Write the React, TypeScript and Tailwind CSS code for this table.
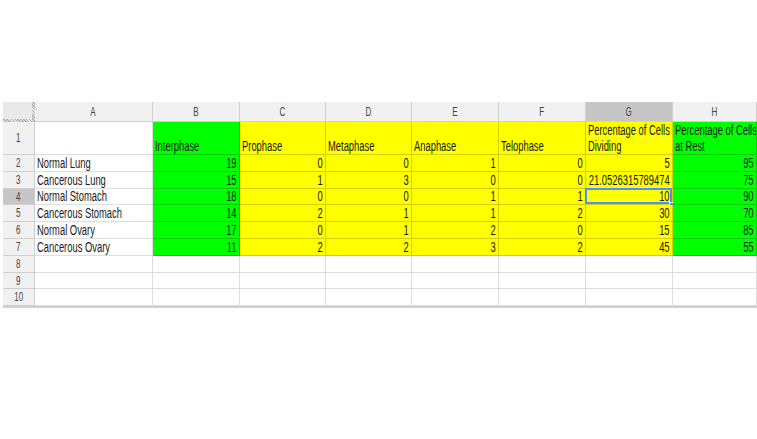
import React from 'react';

type Fill = 'white' | 'green' | 'yellow';

const COLS = ['A', 'B', 'C', 'D', 'E', 'F', 'G', 'H'];

// background + gridline colour for each fill
const fillClass: Record<Fill, string> = {
  white: 'bg-white border-[#dedede]',
  green: 'bg-[#00ff00] border-[#00cf00]',
  yellow: 'bg-[#ffff00] border-[#d2d200]',
};

const rowFills: Fill[] = ['white', 'green', 'yellow', 'yellow', 'yellow', 'yellow', 'yellow', 'green'];

const data: (string | number)[][] = [
  ['Normal Lung', 19, 0, 0, 1, 0, 5, 95],
  ['Cancerous Lung', 15, 1, 3, 0, 0, '21.0526315789474', 75],
  ['Normal Stomach', 18, 0, 0, 1, 1, 10, 90],
  ['Cancerous Stomach', 14, 2, 1, 1, 2, 30, 70],
  ['Normal Ovary', 17, 0, 1, 2, 0, 15, 85],
  ['Cancerous Ovary', 11, 2, 2, 3, 2, 45, 55],
];

const rowHeights = ['h-[17px]', 'h-[17px]', 'h-[16px]', 'h-[17px]', 'h-[17px]', 'h-[17px]', 'h-[17px]', 'h-[16px]', 'h-[17px]'];

function Narrow({ children, align }: { children: React.ReactNode; align: 'left' | 'right' | 'center' }) {
  const origin = align === 'left' ? 'origin-left' : align === 'right' ? 'origin-right' : 'origin-center';
  return <span className={`inline-block shrink-0 whitespace-nowrap scale-x-[0.67] ${origin}`}>{children}</span>;
}

function RowHeader({ n, active, height }: { n: number; active?: boolean; height: string }) {
  return (
    <div
      className={`${height} flex items-center justify-center border-r border-b border-[#cfcfcf] text-[12px] text-[#444] ${
        active ? 'bg-[#c6c6c6]' : 'bg-[#f1f1f1]'
      }`}
    >
      <Narrow align="center">{n}</Narrow>
    </div>
  );
}

export default function App() {
  return (
    <div
      className="w-[757px] h-[439px] bg-white overflow-hidden pt-[102px] pl-[3px] text-[14px] text-[#1a1a1a]"
      style={{ fontFamily: '"Liberation Sans", Arial, sans-serif' }}
    >
      <div className="grid grid-cols-[32px_118px_87px_86px_86px_87px_87px_87px_84px] border-b-2 border-[#d0d0d0]">
        {/* column header row */}
        <div className="h-[20px] flex">
          <div className="flex-1 flex flex-col">
            <div className="flex-1 bg-[#e9e9e9]" />
            <div className="h-[3px] bg-[repeating-linear-gradient(45deg,#b0b0b0_0,#b0b0b0_1px,#e9e9e9_1px,#e9e9e9_2px)]" />
          </div>
          <div className="w-[3px] bg-[repeating-linear-gradient(45deg,#b0b0b0_0,#b0b0b0_1px,#e9e9e9_1px,#e9e9e9_2px)]" />
        </div>
        {COLS.map((c) => (
          <div
            key={c}
            className={`h-[20px] flex items-center justify-center border-r border-b border-[#cfcfcf] text-[12px] text-[#444] ${
              c === 'G' ? 'bg-[#c6c6c6]' : 'bg-[#f1f1f1]'
            }`}
          >
            <Narrow align="center">{c}</Narrow>
          </div>
        ))}

        {/* row 1: column titles */}
        <RowHeader n={1} height="h-[33px]" />
        {['', 'Interphase', 'Prophase', 'Metaphase', 'Anaphase', 'Telophase', ['Percentage of Cells', 'Dividing'], ['Percentage of Cells', 'at Rest']].map(
          (t, i) => (
            <div
              key={i}
              className={`h-[33px] flex flex-col justify-end items-start px-[2px] leading-[15px] border-r border-b overflow-hidden ${fillClass[rowFills[i]]}`}
            >
              {Array.isArray(t) ? (
                t.map((line, j) => (
                  <span key={line} className={j === 0 ? 'leading-[17px]' : 'leading-[15px]'}>
                    <Narrow align="left">{line}</Narrow>
                  </span>
                ))
              ) : (
                <Narrow align="left">{t}</Narrow>
              )}
            </div>
          )
        )}

        {/* data rows + empty rows */}
        {Array.from({ length: 9 }).map((_, r) => {
          const row = data[r];
          const h = rowHeights[r];
          return (
            <React.Fragment key={r}>
              <RowHeader n={r + 2} active={r === 2} height={h} />
              {COLS.map((_, c) => {
                const fill: Fill = row ? rowFills[c] : 'white';
                const value = row ? row[c] : '';
                const isText = typeof value === 'string' && c === 0;
                const selected = r === 2 && c === 6;
                return (
                  <div
                    key={c}
                    className={`${h} relative flex items-end px-[2px] leading-[15px] border-r border-b ${fillClass[fill]}`}
                  >
                    <div className={`flex w-full overflow-hidden ${isText ? 'justify-start' : 'justify-end'}`}>
                      <Narrow align={isText ? 'left' : 'right'}>{value}</Narrow>
                    </div>
                    {selected && (
                      <>
                        <div className="absolute -left-px -top-px right-0 bottom-0 border-2 border-[#4d90fe]" />
                        <div className="absolute -right-[3px] -bottom-[4px] w-[6px] h-[6px] bg-[#4d90fe] border border-white" />
                      </>
                    )}
                  </div>
                );
              })}
            </React.Fragment>
          );
        })}
      </div>
    </div>
  );
}
